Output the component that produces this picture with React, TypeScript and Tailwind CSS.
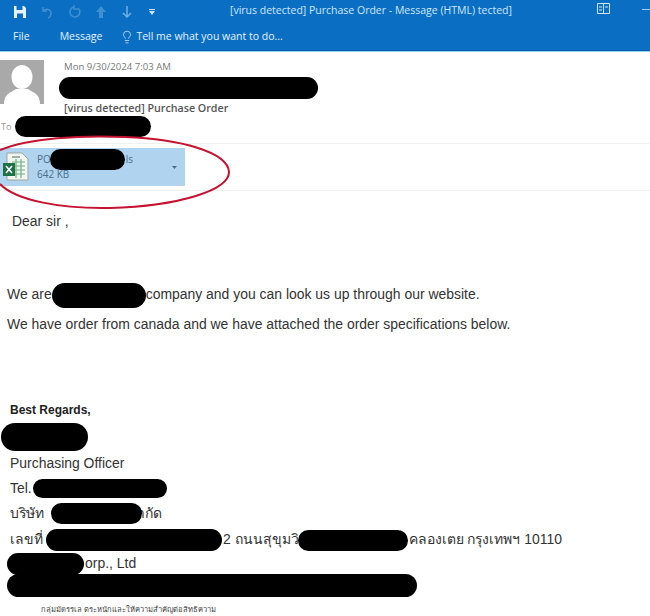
import React from 'react';
import { Lightbulb } from 'lucide-react';

const font = 'font-["Liberation_Sans","Noto_Sans",sans-serif]';

const Redact = ({ className }: { className: string }) => (
  <div className={`absolute rounded-full bg-black ${className}`} />
);

const TitleBar = () => (
  <div className="bg-[#0a6fc2] text-[#cfe6f8] font-['Open_Sans',sans-serif]">
    <div className="relative flex h-[24px] items-center">
      <div className="flex items-center pl-[13px]">
        <svg width="14" height="14" viewBox="0 0 14 14">
          <path d="M1 1h10l2 2v10H1z" fill="#e6f1fa" />
          <path d="M3.5 1h6v4h-6z" fill="#0a6fc2" />
          <path d="M4 8.5h6V13H4z" fill="#0a6fc2" />
        </svg>
        <svg className="ml-[13px]" width="14" height="14" viewBox="0 0 14 14" fill="none" stroke="#3f8fd2" strokeWidth="1.5">
          <path d="M3 2v4h4" />
          <path d="M3 6c3-3 8-2 8 2 0 2-1 4-3 5" />
        </svg>
        <svg className="ml-[13px]" width="14" height="14" viewBox="0 0 14 14" fill="none" stroke="#3f8fd2" strokeWidth="1.5">
          <path d="M11 3a5 5 0 1 1-4-1" />
          <path d="M7 0v4h4" />
        </svg>
        <svg className="ml-[13px]" width="14" height="14" viewBox="0 0 14 14" fill="#3f8fd2">
          <path d="M7 1l5 6H9v6H5V7H2z" />
        </svg>
        <svg className="ml-[12px]" width="14" height="14" viewBox="0 0 14 14" fill="none" stroke="#6fb0e4" strokeWidth="1.5">
          <path d="M7 1v11M3 8l4 4 4-4" />
        </svg>
        <svg className="ml-[14px]" width="8" height="8" viewBox="0 0 8 8" fill="#cfe6f8">
          <path d="M1 1h6v1H1zM1 3h6L4 7z" />
        </svg>
      </div>
      <div className="absolute left-[230px] top-[2px] text-[10.5px] leading-[16px] whitespace-nowrap">
        [virus detected] Purchase Order - Message (HTML) tected]
      </div>
      <svg className="absolute left-[597px] top-[3px]" width="13" height="11" viewBox="0 0 13 11" fill="none" stroke="#cfe6f8">
        <path d="M.5.5h12v10H.5zM6.5.5v10M2 4h3M8 4h3M2 7h3" />
      </svg>
      <div className="absolute left-[642px] top-[9px] h-px w-[8px] bg-[#9ccbef]" />
    </div>
    <div className="flex h-[26px] items-center pl-[13px] text-[10.5px] text-[#e3f1fb]">
      <span>File</span>
      <span className="ml-[30px]">Message</span>
      <Lightbulb className="ml-[18px] h-[14px] w-[14px]" strokeWidth={1.25} />
      <span className="ml-[2px]">Tell me what you want to do...</span>
    </div>
    <div className="h-[1px] bg-[#0a5fa6]" />
    <div className="h-[1px] bg-[#8fd0f5]" />
  </div>
);

const Avatar = () => (
  <svg width="44" height="44" viewBox="0 0 44 44" className="shrink-0">
    <rect width="44" height="44" fill="#a9a9a9" />
    <ellipse cx="22" cy="17" rx="10.5" ry="12" fill="#fff" />
    <path d="M4 44C4 34 10 33 16 29h12c6 4 12 5 12 15z" fill="#fff" />
  </svg>
);

const ExcelIcon = () => (
  <svg width="28" height="30" viewBox="0 0 28 30" className="shrink-0">
    <path d="M6 1h15l6 6v21H6z" fill="#f2f6f2" stroke="#9aa89c" />
    <path d="M11 10h13M11 14h13M11 18h13M11 22h13M15 7v19M20 7v19" stroke="#6fb27f" strokeWidth="1.2" />
    <rect x="11" y="4" width="8" height="2" fill="#9fb3a3" />
    <rect x="2" y="11" width="12" height="13" fill="#1e7145" />
    <path d="M5 14l6 7M11 14l-6 7" stroke="#fff" strokeWidth="1.6" />
  </svg>
);

const App = () => {
  return (
    <div className={`relative h-[616px] w-[650px] overflow-hidden bg-white ${font}`}>
      <TitleBar />

      <div className="flex h-[64px] pt-[8px] font-['Open_Sans',sans-serif]">
        <Avatar />
        <div className="ml-[20px] flex flex-col">
          <div className="text-[9.6px] leading-[14px] text-[#777]">Mon 9/30/2024 7:03 AM</div>
          <div className="mt-[27px] text-[10.7px] font-semibold leading-[14px] text-[#555]">[virus detected] Purchase Order</div>
        </div>
      </div>
      <div className="h-[27px] pl-[1px] pt-[5px] font-['Open_Sans',sans-serif] text-[9px] leading-[12px] text-[#999]">To</div>

      <div className="h-[48px] border-y border-[#f0f0f0] pt-[4px]">
        <div className="flex h-[38px] w-[185px] items-center bg-[#b0d4f0] pl-[1px]">
          <ExcelIcon />
          <div className="ml-[8px] font-['Open_Sans',sans-serif] text-[10px] leading-[15px] text-[#4a6f8c]">
            <div className="flex w-[96px] justify-between">
              <span>PO</span>
              <span>ls</span>
            </div>
            <div>642 KB</div>
          </div>
          <svg className="ml-[39px]" width="5" height="3" viewBox="0 0 5 3" fill="#4a6f8c">
            <path d="M0 0h5L2.5 3z" />
          </svg>
        </div>
      </div>

      <div className="pt-[20px] text-[13.95px] leading-[20px] text-[#333]">
        <div className="pl-[12px]">Dear sir ,</div>
        <div className="mt-[53px] flex pl-[7px]">
          <span>We are</span>
          <span className="ml-[94px]">company and you can look us up through our website.</span>
        </div>
        <div className="mt-[10px] pl-[7px]">We have order from canada and we have attached the order specifications below.</div>

        <div className="mt-[66px] pl-[10px] text-[12px] font-bold leading-[20px] text-[#222]">Best Regards,</div>
        <div className="mt-[33px] pl-[10px]">Purchasing Officer</div>
        <div className="mt-[5px] pl-[10px]">Tel.</div>
        <div className="mt-[5px] flex pl-[10px]">
          <span>บริษัท</span>
          <span className="ml-[93px]">ำกัด</span>
        </div>
        <div className="mt-[6px] flex pl-[10px]">
          <span>เลขที่</span>
          <span className="ml-[180px]">2 ถนนสุขุมวิท</span>
          <span className="ml-[101px]">คลองเตย กรุงเทพฯ 10110</span>
        </div>
        <div className="mt-[4px] pl-[85px]">orp., Ltd</div>
        <div className="mt-[31px] pl-[41px] text-[7.6px] leading-[12px] text-[#444]">กลุ่มมัดรรเล ตระหนักและให้ความสำคัญต่อสิทธิความ</div>
      </div>

      <Redact className="left-[59px] top-[77px] h-[22px] w-[259px]" />
      <Redact className="left-[15px] top-[116px] h-[21px] w-[136px]" />
      <Redact className="left-[50px] top-[149px] h-[21px] w-[75px]" />
      <Redact className="left-[52px] top-[283px] h-[25px] w-[94px]" />
      <Redact className="left-[1px] top-[423px] h-[28px] w-[87px]" />
      <Redact className="left-[33px] top-[479px] h-[19px] w-[134px]" />
      <Redact className="left-[51px] top-[503px] h-[21px] w-[91px]" />
      <Redact className="left-[46px] top-[529px] h-[22px] w-[176px]" />
      <Redact className="left-[298px] top-[530px] h-[21px] w-[110px]" />
      <Redact className="left-[7px] top-[553px] h-[22px] w-[77px]" />
      <Redact className="left-[7px] top-[574px] h-[23px] w-[410px]" />

      <svg className="absolute left-0 top-[130px]" width="240" height="85" viewBox="0 0 240 85" fill="none">
        <path
          d="M0 20C30 8 80 5 125 7c55 2 103 15 104 35 0 18-49 34-119 36C60 79 15 70 0 54"
          stroke="#c41230"
          strokeWidth="2"
        />
      </svg>
    </div>
  );
};

export default App;
